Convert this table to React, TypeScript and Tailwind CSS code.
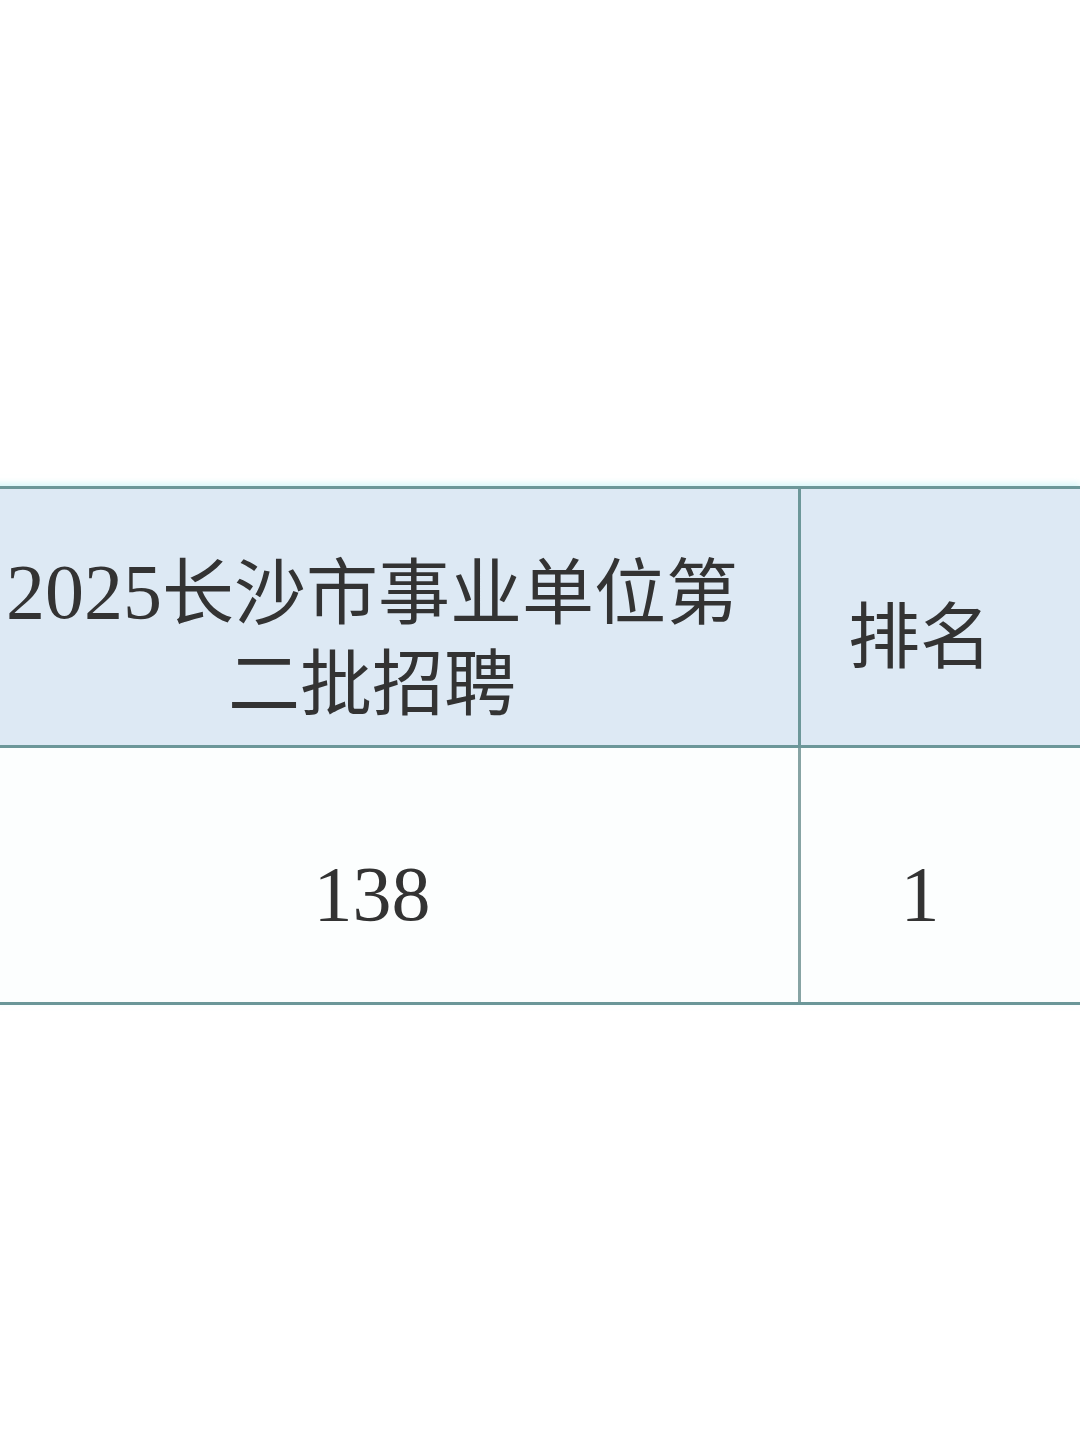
import React from 'react';

const font = { fontFamily: '"Liberation Serif", "Noto Sans CJK SC", serif' };

export default function App() {
  return (
    <div className="w-[1080px] h-[1440px] bg-white overflow-hidden pt-[486px] text-[#333333]" style={font}>
      <div className="ml-[-54px] w-[1134px] border-t-[3px] border-b-[3px] border-[#6c9799] shadow-[0_-3px_6px_rgba(190,240,245,0.6)]">
        {/* Header row */}
        <div className="flex bg-[#dde9f4] h-[256px]">
          <div className="w-[852px] flex items-center justify-center pt-[42px] text-center text-[72px] leading-[91px]">
            <span>
              <span className="text-[78px]">2025</span>长沙市事业单位第
              <br />
              二批招聘
            </span>
          </div>
          <div className="w-[3px] bg-[#6c9799]" />
          <div className="flex-1 flex items-center justify-center pt-[42px] pr-[41px] text-[72px] leading-[91px]">
            排名
          </div>
        </div>
        <div className="h-[3px] bg-[#6c9799]" />
        {/* Body row */}
        <div className="flex bg-[#fcfefe] h-[254px]">
          <div className="w-[852px] flex items-center justify-center pt-[36px] text-[78px] leading-[91px]">
            138
          </div>
          <div className="w-[3px] bg-[#87a4a4]" />
          <div className="flex-1 flex items-center justify-center pt-[36px] pr-[41px] text-[78px] leading-[91px]">
            1
          </div>
        </div>
      </div>
    </div>
  );
}
